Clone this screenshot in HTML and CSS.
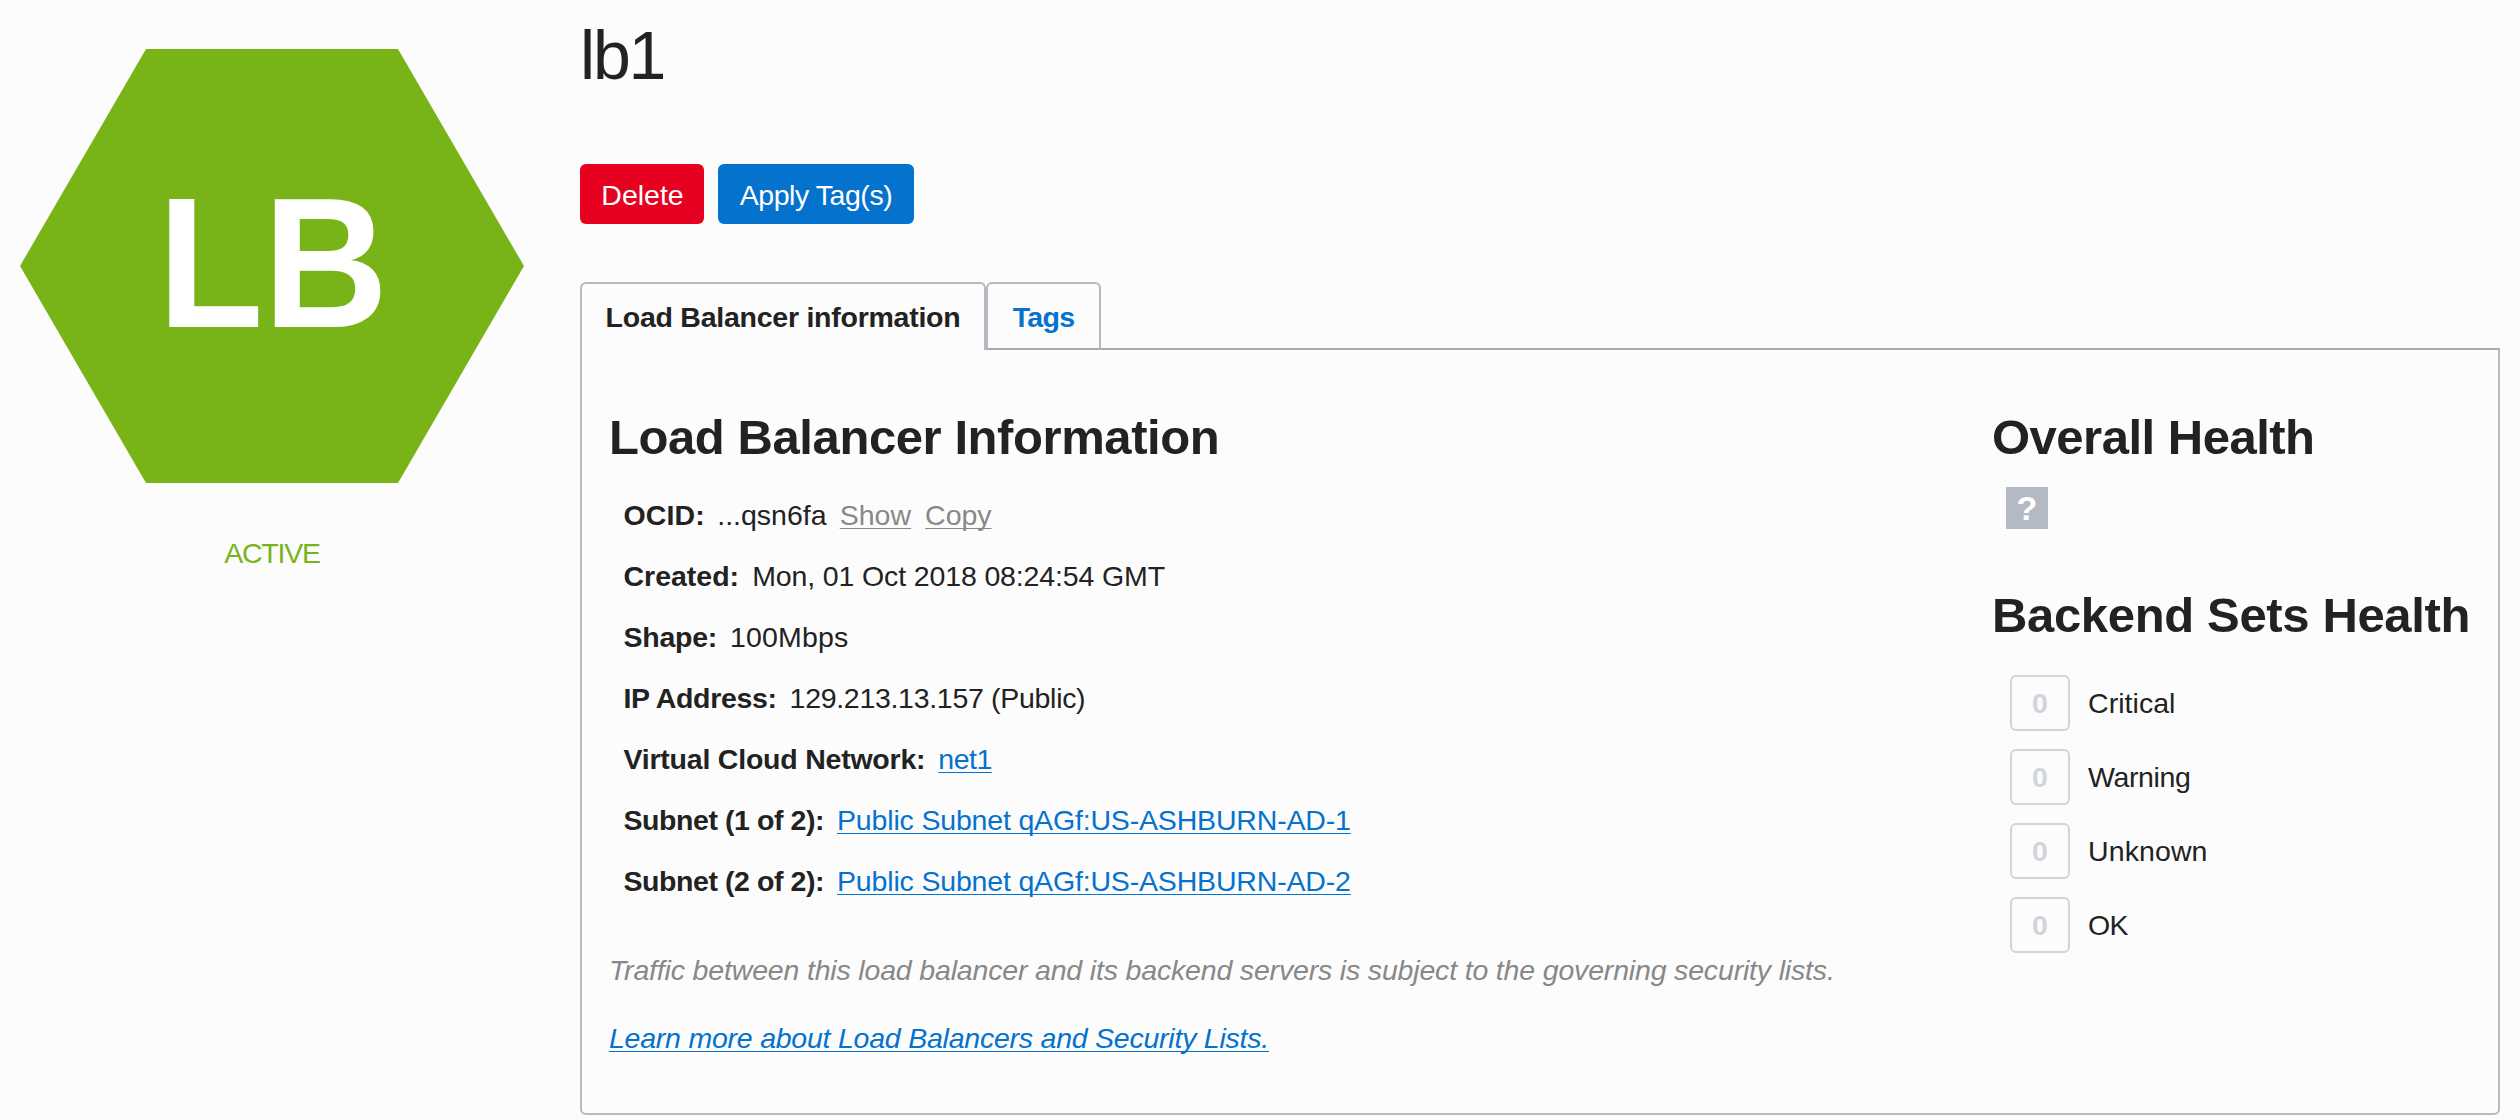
FILE: index.html
```html
<!DOCTYPE html>
<html lang="en">
<head>
<meta charset="utf-8">
<title>lb1</title>
<link rel="stylesheet" href="styles.css">
</head>
<body>
<div class="page">
  <aside class="status">
    <svg class="hexagon" width="504" height="434" viewBox="0 0 504 434">
      <path d="M126 0H378L504 217L378 434H126L0 217Z" fill="#78b418"/>
      <text class="hexagon-text" transform="translate(137.7 278) scale(.935 1)">LB</text>
    </svg>
    <div class="status-label">ACTIVE</div>
  </aside>
  <main class="main">
    <h1 class="title">lb1</h1>
    <div class="actions">
      <button class="btn btn-danger">Delete</button>
      <button class="btn btn-primary">Apply Tag(s)</button>
    </div>
    <nav class="tabs">
      <a class="tab tab-active">Load Balancer information</a>
      <a class="tab tab-link">Tags</a>
      <span class="tabs-rule"></span>
    </nav>
    <section class="panel">
      <div class="info">
        <h2 class="heading heading-info">Load Balancer Information</h2>
        <dl class="details">
          <div class="row row-ocid"><dt>OCID:</dt><dd><span class="ocid">...qsn6fa</span><a class="link link-muted">Show</a><a class="link link-muted">Copy</a></dd></div>
          <div class="row row-created"><dt>Created:</dt><dd>Mon, 01 Oct 2018 08:24:54 GMT</dd></div>
          <div class="row row-shape"><dt>Shape:</dt><dd>100Mbps</dd></div>
          <div class="row row-ip"><dt>IP Address:</dt><dd>129.213.13.157 (Public)</dd></div>
          <div class="row row-network"><dt>Virtual Cloud Network:</dt><dd><a class="link">net1</a></dd></div>
          <div class="row row-subnet"><dt>Subnet (1 of 2):</dt><dd><a class="link">Public Subnet qAGf:US-ASHBURN-AD-1</a></dd></div>
          <div class="row row-subnet"><dt>Subnet (2 of 2):</dt><dd><a class="link">Public Subnet qAGf:US-ASHBURN-AD-2</a></dd></div>
        </dl>
        <p class="note">Traffic between this load balancer and its backend servers is subject to the governing security lists.</p>
        <p class="learn"><a class="link">Learn more about Load Balancers and Security Lists.</a></p>
      </div>
      <div class="health">
        <h2 class="heading heading-overall">Overall Health</h2>
        <div class="unknown-badge">?</div>
        <h2 class="heading heading-sets">Backend Sets Health</h2>
        <ul class="counts">
          <li class="count"><span class="count-box">0</span><span class="count-critical">Critical</span></li>
          <li class="count"><span class="count-box">0</span><span class="count-warning">Warning</span></li>
          <li class="count"><span class="count-box">0</span><span class="count-unknown">Unknown</span></li>
          <li class="count"><span class="count-box">0</span><span class="count-ok">OK</span></li>
        </ul>
      </div>
    </section>
  </main>
</div>
</body>
</html>
```
FILE: styles.css
```css
* { box-sizing: border-box; margin: 0; padding: 0; }

body {
  background: #fcfcfc;
  color: #222;
  font-family: "Liberation Sans", Arial, sans-serif;
  font-size: 28.5px;
}

.page { display: flex; width: 2520px; height: 1120px; padding: 0 20px; }

.status { width: 504px; margin-right: 56px; padding-top: 49px; text-align: center; }
.hexagon { display: block; }
.hexagon-text { fill: #fff; font-size: 185px; font-weight: bold; }
.status-label { margin-top: 50px; line-height: 40px; color: #78b418; letter-spacing: -1.25px; }

.main { width: 1920px; display: flex; flex-direction: column; }
.title { height: 78px; margin-top: 16px; font-size: 68px; font-weight: normal; line-height: 78px; letter-spacing: -2.2px; }

.actions { display: flex; gap: 14px; margin-top: 70px; }
.btn { height: 60px; border: 0; border-radius: 6px; color: #fff; font: inherit; line-height: 62px; white-space: nowrap; }
.btn-danger { width: 124px; padding-left: 1px; background: #e7001f; }
.btn-primary { width: 196px; background: #0572ce; letter-spacing: -.45px; }

.tabs { display: flex; height: 68px; margin-top: 58px; }
.tab { height: 68px; border: 2px solid #b4bac4; border-radius: 6px 6px 0 0; font-weight: bold; line-height: 66px; text-align: center; white-space: nowrap; }
.tab-active { width: 406px; border-bottom: 0; letter-spacing: -.25px; }
.tab-link { width: 115px; border-bottom-color: #aaa; color: #0572ce; letter-spacing: -.68px; }
.tabs-rule { flex: 1; border-bottom: 2px solid #aaa; }

.panel {
  display: flex;
  justify-content: space-between;
  height: 765px;
  padding: 59px 26px 0 27px;
  border: 2px solid #b4bac4;
  border-top: 0;
  border-radius: 0 0 6px 6px;
}

.heading { height: 56px; font-size: 49px; line-height: 56px; letter-spacing: -.35px; white-space: nowrap; }
.heading-info { letter-spacing: -.42px; }
.heading-overall { letter-spacing: -.5px; }

.details { margin: 20px 0 0 14.5px; }
.row { display: flex; height: 61px; line-height: 61px; white-space: nowrap; }
.row dt { margin-right: 13px; font-weight: bold; }
.row dd { display: flex; }
.row-ocid dt { margin-right: 12.5px; letter-spacing: .1px; }
.row-shape dt { letter-spacing: -.25px; }
.row-ip dt { letter-spacing: -.34px; }
.row-network dt { letter-spacing: -.22px; }
.row-subnet dt { letter-spacing: -.43px; }
.row-created dd { letter-spacing: -.13px; }
.row-shape dd { letter-spacing: .15px; }
.row-ip dd { letter-spacing: -.3px; }
.row-network dd { letter-spacing: -.5px; }
.row-subnet dd { letter-spacing: -.17px; }
.ocid { width: 122.5px; }

.link { color: #0572ce; text-decoration: underline; text-decoration-thickness: 1px; text-underline-offset: 3px; text-decoration-skip-ink: none; }
.link-muted { margin-right: 14px; color: #888; }

.note, .learn { height: 68px; font-style: italic; line-height: 68px; white-space: nowrap; }
.note { margin-top: 24px; color: #888; letter-spacing: -.17px; }
.learn { letter-spacing: -.23px; }

.health { width: 480px; }
.unknown-badge { width: 42px; height: 42px; margin: 22px 0 0 14px; background: #b4bac4; color: #fff; font-size: 34px; font-weight: bold; line-height: 43px; text-align: center; }
.heading-sets { margin-top: 58px; }
.counts { display: flex; flex-direction: column; gap: 18px; margin: 32px 0 0 18px; list-style: none; }
.count { display: flex; align-items: center; gap: 18px; height: 56px; white-space: nowrap; }
.count-box { width: 60px; height: 56px; border: 2px solid #d1d5db; border-radius: 6px; color: #d1d5db; font-weight: bold; line-height: 53px; text-align: center; }
.count-critical { letter-spacing: .05px; }
.count-warning { letter-spacing: -.37px; }
.count-unknown { letter-spacing: .1px; }
.count-ok { letter-spacing: -.6px; }
```
